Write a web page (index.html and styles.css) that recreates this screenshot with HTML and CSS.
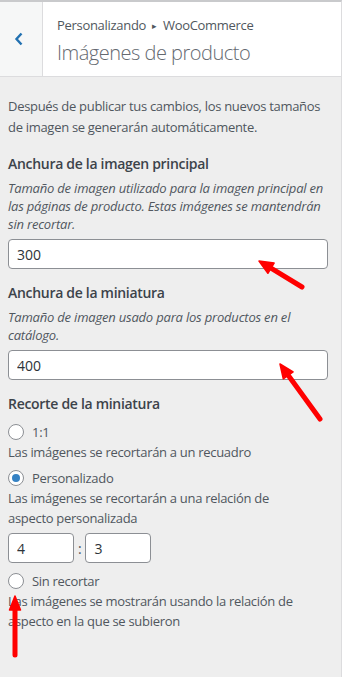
FILE: index.html
```html
<!DOCTYPE html>
<html lang="es">
<head>
  <meta charset="UTF-8">
  <meta name="viewport" content="width=device-width, initial-scale=1.0">
  <title>Imágenes de producto</title>
  <link rel="stylesheet" href="styles.css">
</head>
<body>
  <div class="panel">
    <!-- Section header -->
    <div class="section-header">
      <div class="back-button">
        <svg width="10" height="14" viewBox="0 0 10 14"><polyline points="7.5,1.5 2.5,7 7.5,12.5" fill="none" stroke="#2271b1" stroke-width="2.4"/></svg>
      </div>
      <div class="section-title">
        <span class="breadcrumb">Personalizando <span class="sep">▸</span> WooCommerce</span>
        <h3>Imágenes de producto</h3>
      </div>
    </div>

    <div class="content">
      <p class="intro">Después de publicar tus cambios, los nuevos tamaños de imagen se generarán automáticamente.</p>

      <div class="control">
        <label class="control-title" for="single-width">Anchura de la imagen principal</label>
        <p class="control-description">Tamaño de imagen utilizado para la imagen principal en las páginas de producto. Estas imágenes se mantendrán sin recortar.</p>
        <input type="text" id="single-width" class="text-input" value="300">
      </div>

      <div class="control">
        <label class="control-title" for="thumb-width">Anchura de la miniatura</label>
        <p class="control-description">Tamaño de imagen usado para los productos en el catálogo.</p>
        <input type="text" id="thumb-width" class="text-input" value="400">
      </div>

      <div class="control">
        <span class="control-title">Recorte de la miniatura</span>

        <label class="radio-row first">
          <input type="radio" name="crop">
          <span>1:1</span>
        </label>
        <p class="radio-description">Las imágenes se recortarán a un recuadro</p>

        <label class="radio-row">
          <input type="radio" name="crop" checked>
          <span>Personalizado</span>
        </label>
        <p class="radio-description">Las imágenes se recortarán a una relación de aspecto personalizada</p>
        <div class="ratio">
          <input type="text" class="ratio-input" value="4">
          <span class="ratio-sep">:</span>
          <input type="text" class="ratio-input" value="3">
        </div>

        <label class="radio-row">
          <input type="radio" name="crop">
          <span>Sin recortar</span>
        </label>
        <p class="radio-description">Las imágenes se mostrarán usando la relación de aspecto en la que se subieron</p>
      </div>
    </div>
  </div>

  <!-- Annotation arrows -->
  <svg class="annotations" width="361" height="677" viewBox="0 0 361 677">
    <g fill="#f00" stroke="#f00" stroke-linejoin="round">
      <line x1="302" y1="287" x2="271" y2="268.2" stroke-width="5" stroke-linecap="round"/>
      <polygon points="259,261 274.1,263.1 267.9,273.3" stroke-width="1.5"/>
      <line x1="320" y1="419" x2="288.2" y2="375.3" stroke-width="5" stroke-linecap="round"/>
      <polygon points="280,364 293.1,371.8 283.3,378.8" stroke-width="1.5"/>
      <line x1="15" y1="655" x2="15" y2="610" stroke-width="5" stroke-linecap="round"/>
      <polygon points="15,596 9.5,610 20.5,610" stroke-width="1.5"/>
    </g>
  </svg>
</body>
</html>
```

FILE: styles.css
```css
:root {
  --panel-bg: #eeeeee;
  --border-color: #dcdcde;
  --text-color: #50575e;
  --heading-color: #3c434a;
  --input-border: #8c8f94;
  --accent: #2271b1;
}

body {
  margin: 0;
  background-color: #ffffff;
  font-family: "Segoe UI", "Open Sans", "Noto Sans", sans-serif;
  font-size: 13px;
  letter-spacing: -0.3px;
  color: var(--text-color);
}

.panel {
  width: 341px;
  min-height: 675px;
  border-top: 2px solid #c9cacc;
  border-right: 1px solid var(--border-color);
  background-color: var(--panel-bg);
}

/* Header */
.section-header {
  display: flex;
  height: 74px;
  background-color: #ffffff;
  border-bottom: 1px solid var(--border-color);
}

.back-button {
  width: 43px;
  flex-shrink: 0;
  display: flex;
  align-items: center;
  justify-content: center;
  background-color: #f6f7f7;
  border-right: 1px solid var(--border-color);
  padding-right: 4px;
  box-sizing: border-box;
}

.section-title {
  padding: 14px 0 0 14px;
  display: flex;
  flex-direction: column;
}

.breadcrumb {
  font-size: 13px;
  line-height: 18px;
  color: var(--text-color);
}

.breadcrumb .sep {
  font-size: 9px;
  margin: 0 3px;
  vertical-align: 1px;
}

.section-title h3 {
  margin: 4px 0 0;
  font-size: 20px;
  font-weight: 300;
  letter-spacing: -0.5px;
  line-height: 28px;
  color: #646970;
}

/* Content */
.content {
  padding: 19px 13px 20px 8px;
}

.intro {
  margin: 0;
  line-height: 21px;
}

.control {
  margin-top: 16px;
  display: flex;
  flex-direction: column;
}

.control + .control {
  margin-top: 14px;
}

.control-title {
  font-size: 14px;
  font-weight: 600;
  line-height: 20px;
  color: var(--heading-color);
}

.control-description {
  margin: 5px -6px 6px 0;
  font-style: italic;
  letter-spacing: -0.2px;
  line-height: 18px;
}

.text-input,
.ratio-input {
  box-sizing: border-box;
  height: 30px;
  padding: 0 8px;
  border: 1px solid var(--input-border);
  border-radius: 4px;
  background-color: #ffffff;
  font-family: inherit;
  font-size: 14px;
  color: #2c3338;
  outline: none;
}

.text-input {
  width: 320px;
}

/* Radios */
.radio-row {
  display: flex;
  align-items: center;
  gap: 8px;
  line-height: 20px;
  margin-top: 6px;
}

.radio-row.first {
  margin-top: 8px;
}

.radio-row input {
  appearance: none;
  margin: 0;
  width: 16px;
  height: 16px;
  border: 1px solid var(--input-border);
  border-radius: 50%;
  background-color: #ffffff;
  display: flex;
  align-items: center;
  justify-content: center;
}

.radio-row input:checked:before {
  content: "";
  width: 8px;
  height: 8px;
  border-radius: 50%;
  background-color: #3582c4;
}

.radio-description {
  margin: 0;
  max-width: 295px;
  line-height: 20px;
}

.ratio {
  display: flex;
  align-items: center;
  gap: 4px;
  margin-top: 5px;
}

.ratio-input {
  width: 66px;
}

.ratio-sep {
  font-size: 14px;
}

.ratio + .radio-row {
  margin-top: 8px;
}

.annotations {
  position: absolute;
  top: 0;
  left: 0;
  pointer-events: none;
}
```
